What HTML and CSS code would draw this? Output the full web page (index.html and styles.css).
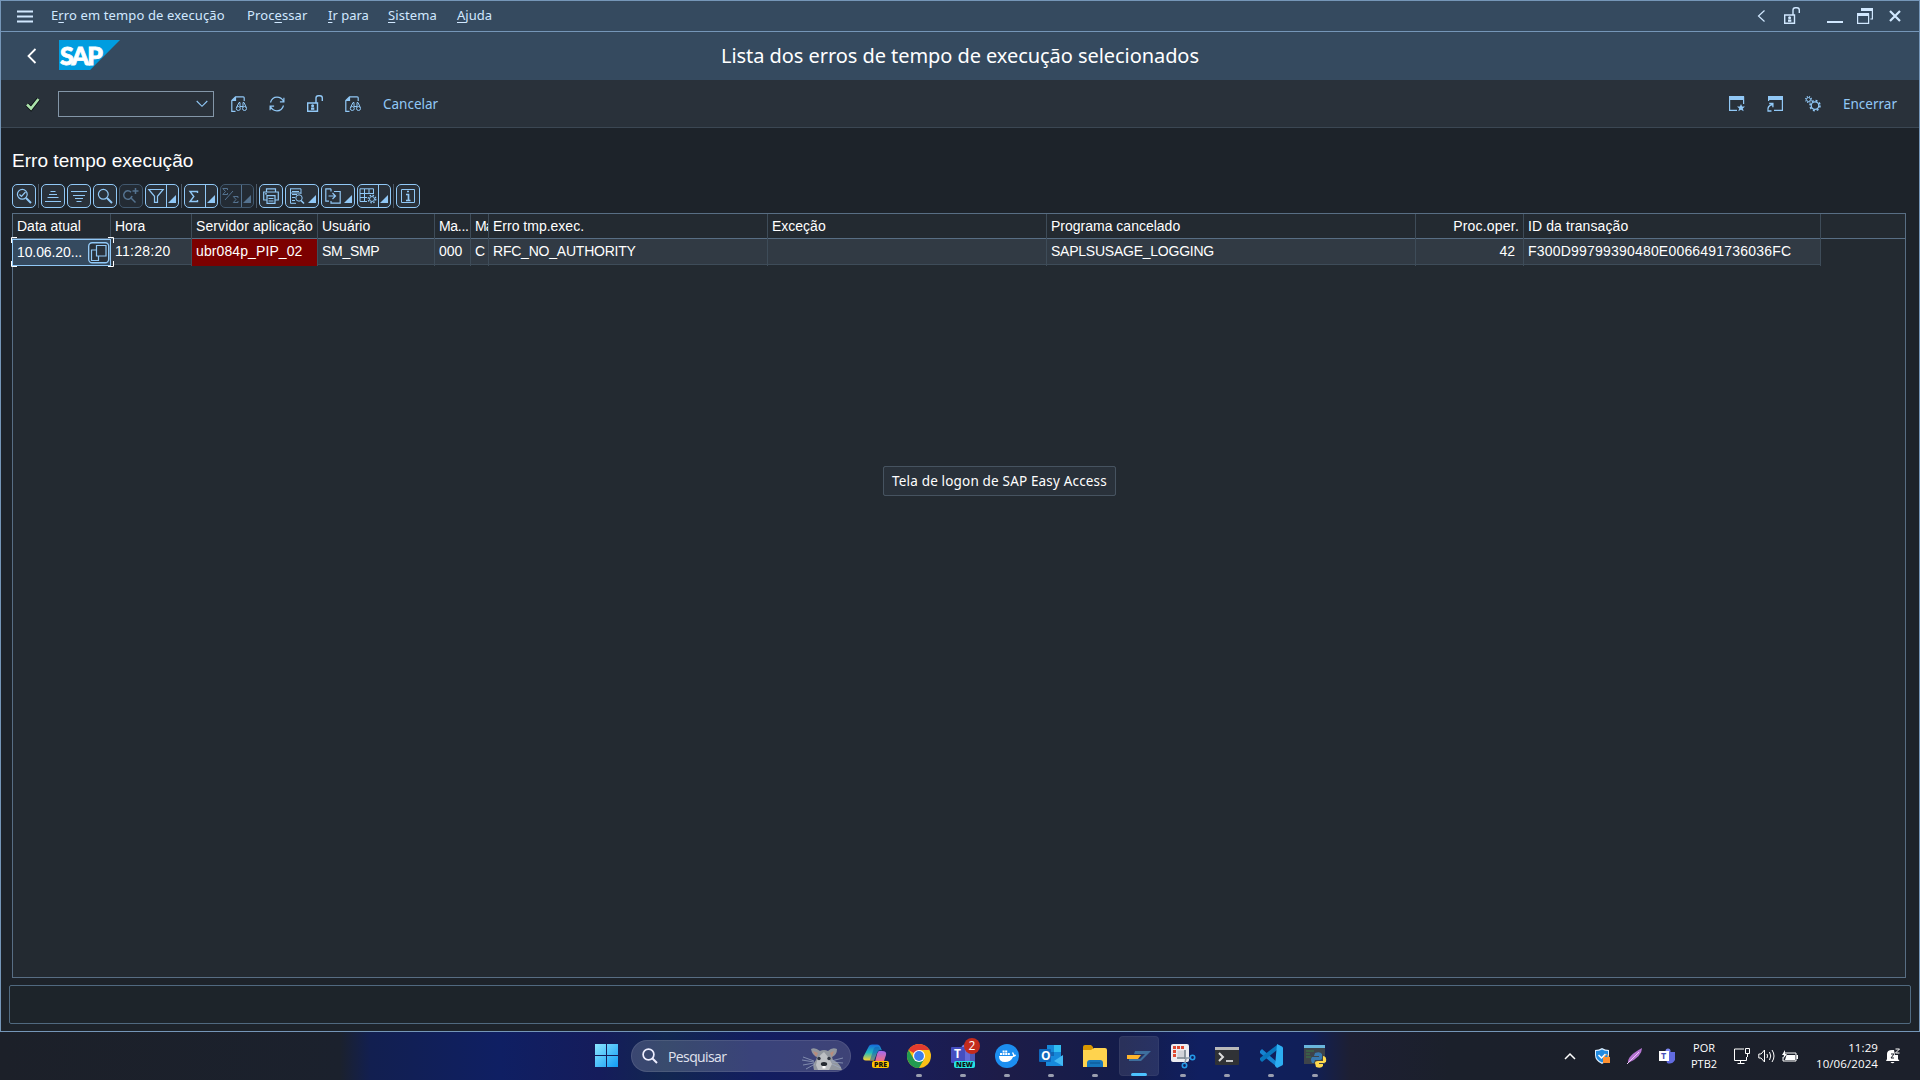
FILE: index.html
```html
<!DOCTYPE html>
<html lang="pt-BR">
<head>
<meta charset="utf-8">
<title>Lista dos erros de tempo de execução selecionados</title>
<link rel="stylesheet" href="styles.css">
</head>
<body>
<svg class="defs" aria-hidden="true">
  <symbol id="lock" viewBox="0 0 16 17"><path d="M.7 8h9.8v8.3H.7zM9 8V3q0-2.300 2.300-2.300h1.700q2.300 0 2.300 2.300v3" fill="none" stroke="currentColor" stroke-width="1.400"/><circle cx="5.600" cy="10.700" r="1.500" fill="currentColor"/><path d="M4 12.500h3.300v2.300H4z" fill="currentColor"/></symbol>
  <symbol id="find" viewBox="0 0 16 16"><path d="M4.500 15.300H.8V4.500L4.500.8h7.700q1 0 1 1V5M.8 4.500h3.700V.8" fill="none" stroke="currentColor" stroke-width="1.200"/><path d="M1 4.500 4.500 1v3.500z" fill="currentColor"/><g fill="none" stroke="currentColor"><circle cx="7.300" cy="12.500" r="2"/><circle cx="13.500" cy="12.500" r="2"/><path d="M5.500 11.500 8 6.500h1v4h3v-4h1l2.300 5"/></g></symbol>
  <symbol id="lens" viewBox="0 0 16 16"><circle cx="6.300" cy="6.300" r="4.900" fill="none" stroke="currentColor" stroke-width="1.200"/><path d="m10 10 5 5" stroke="currentColor" stroke-width="2"/></symbol>
</svg>
<div class="screen">
<main class="window">
  <header class="menubar">
    <svg class="burger" width="16" height="14" viewBox="0 0 16 14"><path d="M0 1.500h16M0 6.500h16M0 11.500h16" stroke="#d1e8ff" stroke-width="2"/></svg>
    <nav class="menus">
      <span class="m1">E<u>r</u>ro em tempo de execução</span><span class="m2">Proc<u>e</u>ssar</span><span class="m3"><u>I</u>r para</span><span class="m4"><u>S</u>istema</span><span class="m5"><u>A</u>juda</span>
    </nav>
    <div class="winctl">
      <svg width="9" height="14" viewBox="0 0 9 14"><path d="M7.500 1.500 1.500 7l6 5.500" fill="none" stroke="#d1e8ff" stroke-width="1.200"/></svg>
      <svg class="wlock" width="16" height="17"><use href="#lock"/></svg>
      <svg class="wmin" width="16" height="16"><path d="M0 14h16" stroke="#d1e8ff" stroke-width="2"/></svg>
      <svg class="wres" width="16" height="16" viewBox="0 0 16 16" fill="none" stroke="#d1e8ff"><path d="M.6 6h11v9.400H.6z" stroke-width="1.200"/><path d="M0 6.500h12M4 1.500h12" stroke-width="3"/><path d="M15.400 1v10h-2" stroke-width="1.200"/></svg>
      <svg class="wclose" width="12" height="12" viewBox="0 0 12 12"><path d="m1 1 10 10M11 1 1 11" stroke="#d1e8ff" stroke-width="2.200"/></svg>
    </div>
  </header>
  <section class="titlebar">
    <svg class="back" width="10" height="16" viewBox="0 0 10 16"><path d="M8.500 1 1.500 8l7 7" fill="none" stroke="#fff" stroke-width="1.800"/></svg>
    <div class="logo"><b>SAP</b></div>
    <h1><span>Lista dos erros de tempo de execução selecionados</span></h1>
  </section>
  <section class="toolbar">
    <svg class="check" width="16" height="14" viewBox="0 0 16 14"><path d="m2 7.500 4 4L13.500 2" fill="none" stroke="#0b1012" stroke-width="4.400"/><path d="m2 7.500 4 4L13.500 2" fill="none" stroke="#abe2ab" stroke-width="2.600"/></svg>
    <div class="combo"><svg width="12" height="8" viewBox="0 0 12 8"><path d="m.7 1 5.300 5.300L11.300 1" fill="none" stroke="#91c8f6" stroke-width="1.100"/></svg></div>
    <div class="tools">
      <svg width="16" height="16"><use href="#find"/></svg>
      <svg width="16" height="16" viewBox="0 0 16 16" fill="none" stroke="currentColor" stroke-width="1.200"><path d="M1.500 6.500C2.500 3 5 1.200 8 1.200c3 0 5 1.300 6.500 4M14.500 9.500C13.500 13 11 14.800 8 14.800c-3 0-5-1.300-6.500-4M14.900 1.800v4h-4M1.100 14.200v-4h4"/></svg>
      <svg width="16" height="17"><use href="#lock"/></svg>
      <svg width="16" height="16"><use href="#find"/></svg>
    </div>
    <span class="cancel">Cancelar</span>
    <div class="tools right">
      <svg width="16" height="16" viewBox="0 0 16 16"><path d="M.6 1h14v7M.6 1v13.400H8" fill="none" stroke="currentColor" stroke-width="1.200"/><path d="M0 0h15v4H0zM12 8l1.100 2.500H16l-2.200 1.900.9 2.900-2.700-1.600-2.700 1.600.9-2.900L8 10.500h2.900z" fill="currentColor"/></svg>
      <svg width="16" height="16" viewBox="0 0 16 16"><path d="M1.600 5V1h13.800v13.400H7" fill="none" stroke="currentColor" stroke-width="1.200"/><path d="M1 0h15v4H1z" fill="currentColor"/><path d="M1 15.300q-1-5.800 4.500-6.800M2.200 7.500h3.700v3.700M.5 15h4" fill="none" stroke="currentColor" stroke-width="1.300"/></svg>
      <svg width="16" height="16" viewBox="0 0 16 16" fill="none" stroke="currentColor"><circle cx="3.500" cy="3.500" r="2" stroke-width="1"/><circle cx="3.500" cy="3.500" r="2.900" stroke-width="1.200" stroke-dasharray="1.150 1.150"/><circle cx="10" cy="9.600" r="3.800" stroke-width="1.300"/><circle cx="10" cy="9.600" r="5" stroke-width="1.600" stroke-dasharray="1.960 1.960"/></svg>
      <span class="exit">Encerrar</span>
    </div>
  </section>
  <section class="content">
    <h2><span>Erro tempo execução</span></h2>
    <div class="gridbar">
      <span class="btn"><svg width="16" height="16"><use href="#lens"/><path d="m3.500 6.500 2 2 4-4.500" fill="none" stroke="currentColor" stroke-width="1.200"/></svg></span><i class="sep"></i>
      <span class="btn"><svg width="16" height="16" stroke="currentColor"><path d="M5.500 3.500h5M4 6.500h8M2.500 9.500h11M0 13.500h16"/></svg></span>
      <span class="btn"><svg width="16" height="16" stroke="currentColor"><path d="M0 3.500h16M2 7.500h12M4 10.500h8M5.500 13.500h5"/></svg></span>
      <span class="btn"><svg width="16" height="16"><use href="#lens"/></svg></span>
      <span class="btn off"><svg width="16" height="16"><path d="M8 4.200A4.200 4.200 0 1 0 9 8M8.500 10.500l4 4M12.500 0v6M9.500 3h6" fill="none" stroke="currentColor" stroke-width="1.500"/></svg></span>
      <span class="btn drop"><svg width="16" height="16"><path d="M.8 1.500h14.400L9.500 8.300v6H6.500v-6z" fill="none" stroke="currentColor" stroke-width="1.200"/></svg></span><i class="sep"></i>
      <span class="btn drop"><svg width="16" height="16"><path d="M10.500 5V3.500H3L6.800 8.500l-3.800 5h7.500V12" fill="none" stroke="currentColor" stroke-width="1.400"/></svg></span>
      <span class="btn drop off"><svg width="16" height="16" fill="none" stroke="currentColor"><path d="M4.500 2V.5H-.2L2.500 3.500-.2 6.500h4.700V5M15 10V8.500h-4.700L13 11.500l-2.700 3H15V13M2 12 10 3"/></svg></span><i class="sep"></i>
      <span class="btn"><svg width="16" height="16" fill="none" stroke="currentColor" stroke-width="1.200"><path d="M3.500 4V.8h9V4M3.500 12H.7V4h14.600v8h-2.800M4 7.600h8v7.800H4zM5.500 10.500h5M5.500 13h5M2 5.800h2"/></svg></span>
      <span class="btn wide"><svg width="16" height="16" fill="none" stroke="currentColor"><path d="M1 .8h11V6M1.500.8v14.500H7M3 3.500h7M3 6.500h5M3 9.500h3M3 12.500h3M1 5h11"/><circle cx="10" cy="10" r="3.200"/><path d="m12 12.500 3 3" stroke-width="1.600"/></svg></span>
      <span class="btn wide"><svg width="16" height="16" fill="none" stroke="currentColor" stroke-width="1.200"><path d="M6 .8H.8v12.400H4M6 3.500V.8M6 13v2.200h9.200V3.500H9M3.500 8h6.500M7.500 5l3 3-3 3"/></svg></span>
      <span class="btn drop"><svg width="17" height="16" fill="none" stroke="currentColor"><path d="M0 .8h13.500V6M0 .8v12.700h7M0 5.500h13M0 9.500h7M4.500 1v12M9 1v5"/><circle cx="12" cy="11" r="2.500"/><circle cx="12" cy="11" r="3.800" stroke-dasharray="1.500 1.500" stroke-width="1.300"/></svg></span><i class="sep"></i>
      <span class="btn"><svg width="16" height="16"><path d="M1.500 1.500h13v13h-13z" fill="none" stroke="currentColor"/><path d="M7 3.500h2M6 6.500h2.500v6M6 12.500h4.500" fill="none" stroke="currentColor" stroke-width="1.700"/></svg></span>
    </div>
    <div class="grid">
      <div class="row head"><span>Data atual</span><span>Hora</span><span><em class="srv">Servidor aplicação</em></span><span>Usuário</span><span class="mand">Ma...</span><span class="clip">Ma</span><span>Erro tmp.exec.</span><span>Exceção</span><span>Programa cancelado</span><span class="num oper">Proc.oper.</span><span class="tid">ID da transação</span><span></span></div>
      <div class="row data"><span class="selected">10.06.20...<svg class="pick" width="22" height="22" viewBox="0 0 22 22" fill="#29313a" stroke="#91c8f6"><rect x=".7" y=".7" width="20" height="20" rx="3.500" stroke-width="1.400"/><path d="M3.500 8h7v10.500h-7z" stroke-width="1.200"/><path d="M8.500 3.500h9.500V14H8.500z" stroke-width="1.200"/></svg><svg class="corners" width="103" height="30" fill="none" stroke="#fff"><path d="M.5 6V.5H6M97 .5h5.500V6M.5 24v5.500H6M97 29.500h5.500V24"/></svg></span><span class="time">11:28:20</span><span class="server">ubr084p_PIP_02</span><span class="user">SM_SMP</span><span>000</span><span>C</span><span class="rfc">RFC_NO_AUTHORITY</span><span></span><span class="prog">SAPLSUSAGE_LOGGING</span><span class="num pad">42</span><span class="hash">F300D99799390480E0066491736036FC</span></div>
      <div class="tooltip"><span>Tela de logon de SAP Easy Access</span></div>
    </div>
  </section>
  <footer class="status"></footer>
</main>
<footer class="taskbar">
  <svg class="win" width="24" height="24"><defs><linearGradient id="wg" x2="1" y2="1"><stop stop-color="#8be5ff"/><stop offset="1" stop-color="#109cf5"/></linearGradient></defs><path d="M0 0h11v11H0zM12 0h11v11H12zM0 12h11v11H0zM12 12h11v11H12z" fill="url(#wg)"/></svg>
  <div class="search"><svg width="16" height="16" viewBox="0 0 16 16"><circle cx="6.500" cy="6.500" r="5.400" fill="none" stroke="#eef" stroke-width="1.700"/><path d="m10.500 10.500 4.500 4.500" stroke="#eef" stroke-width="2"/></svg><span>Pesquisar</span>
    <svg class="animal" width="42" height="24" viewBox="0 0 42 24"><path d="M12 23q-2-6 2-10l1-3q-5-2-6-8 4-2 9 2 4-2 8 0 4-4 9-2 0 6-5 8l1 3q7 3 9 10z" fill="#92979f"/><path d="M14 18q1-8 8-13 5 5 8 12l-3 6H16z" fill="#bdc0c4"/><path d="m11 4 5 2-2 4zm21 0-4 2 2 4z" fill="#b98c7d"/><path d="M1 10l11 4M0 13l12 2M1 18l11-2M4 22l9-5M29 14l12-3M30 15l11 1M30 17l9 4" stroke="#9dabc4" stroke-width=".7"/><circle cx="17" cy="11.500" r="1.700" fill="#303541"/><circle cx="27" cy="11.500" r="1.700" fill="#303541"/><ellipse cx="22" cy="17" rx="3.200" ry="2" fill="#252a32"/><path d="M20.500 19h3v2.500h-3z" fill="#fff"/></svg>
  </div>
  <div class="apps">
    <div class="app"><svg width="24" height="24"><defs><linearGradient id="c1" x2="0" y2="1"><stop stop-color="#1669dd"/><stop offset=".5" stop-color="#20b9bf"/><stop offset="1" stop-color="#ffd02d"/></linearGradient><linearGradient id="c2" x2="0" y2="1"><stop stop-color="#a26af0"/><stop offset="1" stop-color="#fa6f73"/></linearGradient></defs><path d="M6 2q.5-1.500 3-1.500h5q3 0 4 4l1 2q-3-2-5 2l-3 8H3q-4 0-2.500-4z" fill="url(#c1)"/><path d="m9 10 2-6q2-2 5-1l2 4q-3-1-5 3l-1 6H7z" fill="#135bb5" opacity=".55"/><path d="M16 7h3q5 0 4 4l-2 6q-1 1-4 1h-5l2-8q1-3 2-3z" fill="url(#c2)"/></svg><b class="tag pre">PRE</b></div>
    <div class="app run"><svg width="24" height="24"><circle cx="12" cy="12" r="12" fill="#fbc116"/><path d="M12 12 1.600 6A12 12 0 0 1 22.400 6H12z" fill="#e33b2e"/><path d="M1.600 6A12 12 0 0 0 12 24l5.200-9L12 12 6.800 15z" fill="#229b50"/><circle cx="12" cy="12" r="6" fill="#fff"/><circle cx="12" cy="12" r="4.900" fill="#3b7ded"/></svg></div>
    <div class="app run"><svg width="24" height="24"><circle cx="14" cy="4" r="3.500" fill="#777ee8"/><rect x="8" y="4" width="16" height="15" rx="3" fill="#656bd8"/><path d="M19 5h5v14h-5z" fill="#5059b8"/><rect y="3" width="14" height="16" rx="1" fill="#454ec0"/></svg><b class="t team">T</b><b class="tag new">NEW</b><span class="badge">2</span></div>
    <div class="app run"><svg width="24" height="24"><circle cx="12" cy="12" r="12" fill="#1c8ef0"/><path d="M4 12h14q0-2-1-3l1-1 1.500 2.700H21q0 2-3 2.300-2 5-8 5-6 0-6-6z" fill="#fff"/><path d="M5 9h2v2H5zm2.600 0h2v2h-2zm2.600 0h2v2h-2zm2.600 0h2v2h-2zM7.600 6.500h2v2h-2zm2.600 0h2v2h-2z" fill="#fff"/></svg></div>
    <div class="app run"><svg width="24" height="24"><path d="M8 1h14v14H8z" fill="#1688d8"/><path d="M15 1h7v7h-7z" fill="#31bdf1"/><path d="M8 8h7v7H8z" fill="#1066b5"/><path d="M7 12h17v10H7z" fill="#1689db"/><path d="m24 11-9 6 9 5z" fill="#43b8f3"/><rect y="5" width="12" height="13" rx="1" fill="#0f68bd"/></svg><b class="t out">O</b></div>
    <div class="app run"><svg width="24" height="24"><path d="M0 3q0-2 2-2h6l2 2v5H0z" fill="#d99700"/><path d="M0 6h8l3-2h11q2 0 2 2v17H0z" fill="#ffd34e"/><path d="M4 23v-4q0-3 3-3h10q3 0 3 3v4z" fill="#1676bd"/><path d="M7 19h10" stroke="#0a538e"/></svg></div>
    <div class="app run active"><svg width="24" height="12"><path d="M8 1h16L14 11H2V9h11l5-5H7z" fill="#3e6f9d"/><path d="M0 5h14l-3 4H0z" fill="#ffb52b"/></svg></div>
    <div class="app run"><svg width="25" height="24"><rect x="0" y="0" width="18" height="18" rx="2" fill="#ececf0"/><path d="M3.500 13V3.500H14" fill="none" stroke="#e04a32" stroke-width="3" stroke-dasharray="3 1"/><path d="M6.500 6.500h8v8h-8z" fill="#d2d3d9"/><path d="M6 14h9M14 6v9" stroke="#7b858f" stroke-width="1.600"/><circle cx="21.500" cy="13.500" r="2.200" fill="none" stroke="#249ae8" stroke-width="1.600"/><circle cx="13.500" cy="21.500" r="2.200" fill="none" stroke="#249ae8" stroke-width="1.600"/><path d="M19 14h-4l-1 5" fill="none" stroke="#8f9ba8" stroke-width="1.500"/></svg></div>
    <div class="app run"><svg width="24" height="18"><rect width="24" height="18" rx="1" fill="#303236"/><path d="M0 0h24v3H0z" fill="#b9b9b9"/><path d="m4 6 4 4-4 4" fill="none" stroke="#ddd" stroke-width="2"/><path d="M11 14h7" stroke="#eee" stroke-width="1.600"/></svg></div>
    <div class="app run"><svg width="24" height="24"><path d="m1 7 2-2 15 13v5L1 9z" fill="#1684d1"/><path d="m1 16 2 2L18 6V1L1 14z" fill="#0876bd"/><path d="m18 0 5 2.500q1 .5 1 1.500v16q0 1-1 1.500L18 24l-2-2z" fill="#2caef2"/></svg></div>
    <div class="app run"><svg width="24" height="24"><path d="M1 1h21v19H1z" fill="#3e444a"/><path d="M1 1h21v3H1z" fill="#69b6dc"/><path d="M3 7h8M3 10h4M3 13h5" stroke="#367946"/><path d="M12 9q5-2 7 1v4q0 2-3 2h-4l-1 3H9q-2-4 0-6h7v-1h-5z" fill="#3879af"/><path d="M20 12q4 0 3 6l-2 1h-5v1h4v2q-2 3-7 1l-1-4q0-2 3-2h5z" fill="#ffd94d"/></svg></div>
  </div>
  <div class="tray">
    <svg class="up" width="12" height="8"><path d="m1 7 5-5 5 5" fill="none" stroke="#fff" stroke-width="1.500"/></svg>
    <svg class="shield" width="15" height="16"><path d="M7 0q3 2 7 2v5q0 6-7 9Q0 13 0 7V2q4 0 7-2z" fill="#dceeff"/><path d="M7 1.500q3 1.500 6 1.500v4q0 5-6 7.500Q1 12 1 7V3q3 0 6-1.500z" fill="#218be0"/><path d="m3.500 7 3 3 4-4" fill="none" stroke="#fff" stroke-width="1.500"/><path d="M8 9h7v6H8z" fill="#ff9130"/><path d="M9.500 9V8q2-3 4 0v1" fill="none" stroke="#ffa445"/></svg>
    <svg class="feather" width="16" height="16"><path d="M1 15Q0 8 15 0q0 9-14 15z" fill="#b675d3"/><path d="M0 16 12 4" stroke="#f0c7fa"/></svg>
    <div class="miniteams"><svg width="16" height="16"><circle cx="9" cy="3" r="2.500" fill="#7e87f1"/><path d="M6 4h10v8q-3 5-8 3z" fill="#626be0"/><path d="M0 3h10v10H0z" fill="#fff"/></svg><b>T</b></div>
    <div class="lang">POR<br>PTB2</div>
    <svg class="net" width="16" height="16" fill="none" stroke="#fff"><path d="M10 1H.5v11.500h12V9M3.500 15.500h7M6.500 12.500v3M11.500.5h4v5h-4zM13.500 5.500V9"/></svg>
    <svg class="vol" width="17" height="14" fill="none" stroke="#fff"><path d="M.8 5H3l3.500-4v12L3 9H.8zM9 5q1 2 0 4M11.500 3q2.500 4 0 8M14 1q4 6 0 12"/></svg>
    <svg class="bat" width="16" height="13"><path d="M3 3h11v8H1V7" fill="none" stroke="#fff"/><path d="M4.500 5H13v5H3zM14.500 5H16v4h-1.500zM3 0 0 5h2L1 9l4-5H3z" fill="#fff"/></svg>
    <div class="clock"><span>11:29</span><span>10/06/2024</span></div>
    <svg class="bell" width="14" height="16"><path d="M1 11V6q0-4 5-4h2l1 5h3v4l1.500 2H0zM4.500 14h4q-2 2.500-4 0z" fill="#fff"/><path d="M5 6h3l-3 4h3" fill="none" stroke="#1c202b"/><path d="M9.500 1h4l-4 4h4" fill="none" stroke="#fff"/></svg>
  </div>
</footer>
</div>
</body>
</html>
```
FILE: styles.css
```css
* { box-sizing: border-box; }
body { margin: 0; background: #1c2029; color: #fff; overflow: hidden; }
svg { display: block; flex: none; overflow: visible; }
h1, h2 { margin: 0; font-weight: 400; }
em { font-style: normal; }
.defs { position: absolute; width: 0; height: 0; }
.screen { width: 1920px; height: 1080px; display: flex; flex-direction: column; font-family: "Noto Sans", sans-serif; white-space: nowrap; }
.window { height: 1032px; display: flex; flex-direction: column; border: 1px solid #7596b8; background: #1d232a; }
.menubar { height: 31px; display: flex; align-items: center; padding: 0 18px 0 16px; background: #354a5f; border-bottom: 1px solid #7596b8; font-size: 13px; color: #d1e8ff; }
.burger { margin-top: 1px; }
.menus { display: grid; grid-template-columns: 196px 81px 60px 69px 60px; margin-left: 18px; margin-top: -2px; }
.menus u { text-underline-offset: 2px; }
.m1 { letter-spacing: .12px; }
.m2, .m4 { letter-spacing: .1px; }
.winctl { margin-left: auto; display: flex; align-items: center; }
.wlock { margin-left: 18px; margin-top: -2px; }
.wmin { margin-left: 27px; }
.wres { margin-left: 14px; }
.wclose { margin-left: 16px; }
.titlebar { height: 48px; background: #354a5f; display: flex; align-items: center; padding-left: 26px; }
.logo { width: 61px; height: 30px; margin: -2px 0 0 22px; background: #009de0; clip-path: polygon(0 0, 100% 0, 51% 100%, 0 100%); }
.logo b { display: block; font: 900 25px/30px Lato, sans-serif; letter-spacing: -1.900px; padding-left: 1px; -webkit-text-stroke: .8px #fff; }
h1 { flex: 1; text-align: center; font-size: 20px; letter-spacing: -.06px; padding-right: 119px; line-height: 28px; margin-top: 0; }
.toolbar { height: 48px; display: flex; align-items: center; padding: 0 24px 0 24px; background: #29313a; border-bottom: 1px solid #3b4753; color: #91c8f6; font-size: 13.500px; }
.combo { width: 156px; height: 26px; border: 1px solid #8396a8; margin-left: 17px; margin-top: 1px; display: flex; align-items: center; justify-content: flex-end; padding-right: 5px; }
.tools { display: flex; align-items: center; gap: 22px; margin-left: 17px; }
.cancel { margin-left: 22px; }
.right { margin-left: auto; }
.exit { width: 52px; }
.content { flex: 1; display: flex; flex-direction: column; padding: 0 13px 7px 11px; font-family: "Liberation Sans", sans-serif; }
h2 { height: 56px; font-size: 19px; letter-spacing: .04px; line-height: 24px; padding: 21px 0 0; }
.gridbar { height: 29px; display: flex; align-items: flex-start; gap: 2px; color: #91c8f6; }
.btn { width: 24px; height: 24px; border: 1px solid #91c8f6; border-radius: 5px; background: #29313a; display: flex; align-items: center; padding-left: 3px; position: relative; }
.drop, .wide { width: 34px; }
.btn.drop { padding-left: 2px; }
.btn.drop svg { width: 16px; }
.drop::before { content: ""; position: absolute; left: 20px; top: 0; width: 1px; height: 22px; background: currentColor; }
.drop::after, .wide::after { content: ""; position: absolute; right: 2px; bottom: 4px; border: 4px solid transparent; border-right-color: currentColor; border-bottom-color: currentColor; }
.btn.off { color: #54728f; border-color: #41586e; background: #232b34; }
.sep { width: 1px; height: 24px; background: #4b5968; }
.grid { flex: 1; border: 1px solid #586e84; background: #232a31; font-size: 14px; display: flex; flex-direction: column; align-items: flex-start; }
.row { display: grid; grid-template-columns: 98px 81px 126px 117px 36px 18px 279px 279px 369px 108px 297px; }
.head { width: 100%; height: 25px; grid-template-columns: 98px 81px 126px 117px 36px 18px 279px 279px 369px 108px 297px 1fr; border-bottom: 1px solid #586e84; line-height: 25px; }
.row > span { padding-left: 4px; border-right: 1px solid #3e4c59; }
.head > span:last-child { border: 0; }
.data { height: 26px; line-height: 25px; background: #313a44; border-bottom: 1px solid #3e4c59; }
.srv { letter-spacing: .1px; }
.row > .mand { letter-spacing: -.3px; }
.row > .clip { overflow: hidden; letter-spacing: -1px; }
.row > .num { text-align: right; padding-right: 4px; }
.oper { letter-spacing: .2px; }
.tid { letter-spacing: .1px; }
.row > .pad { padding-right: 8px; }
.time { letter-spacing: .25px; }
.user { letter-spacing: -.3px; }
.rfc { letter-spacing: -.22px; }
.prog { letter-spacing: -.24px; }
.hash { letter-spacing: .2px; }
.row > .server { background: #7c0000; }
.server { letter-spacing: .1px; }
.row > .selected { position: relative; background: #354a5f; border: 1px solid #91c8f6; margin-left: -1px; line-height: 25px; letter-spacing: -.1px; }
.pick { position: absolute; right: 0; top: 2px; }
.corners { position: absolute; left: -2px; top: -3px; }
.tooltip { width: 233px; height: 30px; margin: 201px 0 0 870px; border: 1px solid #465360; border-radius: 2px; background: linear-gradient(#29313a, #29313a) padding-box, conic-gradient(#465360, #465360) border-box; display: flex; align-items: center; justify-content: center; font: 13.500px "Noto Sans", sans-serif; letter-spacing: .17px; }
.status { height: 39px; margin: 0 8px 7px; border: 1px solid #50697f; border-radius: 2px; background: #1d242a; }
.taskbar { height: 48px; display: flex; align-items: center; background: linear-gradient(90deg, #1c2029 0, #1b212d 340px, #121f50 370px, #0f1f63 500px, #151c5b 600px, #122750 665px, #131d60 760px, #191d59 900px, #1d1c48 1000px, #141c4a 1120px, #101f60 1200px, #101f58 1310px, #1d1f33 1350px, #1b202b 1450px, #1c202b 100%); }
.win { margin-left: 595px; }
.search { width: 220px; height: 32px; margin-left: 12px; border-radius: 16px; background: #ffffff2b; border: 1px solid #ffffff18; display: flex; align-items: center; padding-left: 10px; font: 14px "Open Sans", sans-serif; color: #e0e3ee; }
.search span { margin-left: 10px; letter-spacing: -.6px; }
.animal { margin-left: auto; margin-right: 6px; margin-top: 5px; }
.apps { display: flex; gap: 4px; margin-left: 4px; }
.app { width: 40px; height: 40px; border-radius: 4px; display: flex; align-items: center; justify-content: center; position: relative; }
.run::after { content: ""; position: absolute; left: 17px; bottom: -1px; width: 6px; height: 3px; border-radius: 2px; background: #9a9eaf; }
.active { background: #ffffff18; border: 1px solid #ffffff0c; }
.active::after { left: 11px; width: 16px; background: #4cc2ff; }
.tag { position: absolute; font: 800 7px/7px "Open Sans", sans-serif; color: #111; border-radius: 2px; padding: 0 2px; }
.pre { background: #ffc400; right: 6px; bottom: 8px; }
.new { background: #24e4e2; right: 8px; bottom: 8px; }
.t { position: absolute; font: 700 12px/12px "Open Sans", sans-serif; }
.team { left: 11px; top: 12px; }
.out { left: 10px; top: 14px; }
.badge { position: absolute; right: 3px; top: 2px; width: 16px; height: 16px; border-radius: 8px; background: #c42b1c; text-align: center; font: 12px/16px "Open Sans", sans-serif; }
.tray { margin-left: auto; display: flex; align-items: center; font: 11px/16px "Open Sans", sans-serif; padding-right: 20px; }
.shield { margin-left: 19px; }
.feather { margin-left: 17px; }
.miniteams { position: relative; margin-left: 16px; }
.miniteams b { position: absolute; left: 2px; top: 0; color: #4850b8; font-size: 9px; }
.lang { width: 38px; margin-left: 10px; text-align: center; }
.net { margin-left: 11px; }
.vol { margin-left: 8px; }
.bat { margin-left: 7px; }
.clock { width: 80px; margin-left: 0; display: flex; flex-direction: column; text-align: right; font-size: 11.500px; letter-spacing: .1px; }
.bell { margin-left: 8px; }
```
